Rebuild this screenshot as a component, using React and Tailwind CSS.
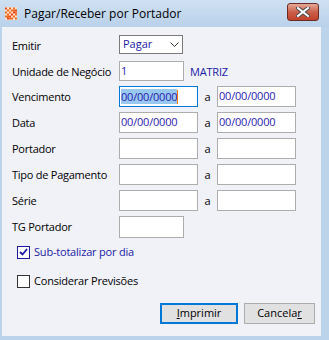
import React from 'react';

const font = { fontFamily: '"Open Sans", "Noto Sans", sans-serif' };

const Box = ({ w = 'w-[79px]', h = 'h-[21px]', focused, children }) => (
  <div
    className={`${w} ${h} flex items-center bg-white border ${focused ? 'border-[#0078d7]' : 'border-[#adadad]'} pl-[1px] text-[11px] tracking-[-0.2px] text-[#2a1ab0]`}
  >
    {children}
  </div>
);

const Row = ({ label, h = 'h-[26px]', children }) => (
  <div className={`flex items-start ${h}`}>
    <div className="w-[107px] pt-[3px] text-[11px] tracking-[-0.25px] text-black">{label}</div>
    {children}
  </div>
);

const Range = ({ from, to, focused }) => (
  <div className="flex items-start">
    <Box focused={focused}>{from}</Box>
    <span className="w-[19px] pt-[3px] text-center text-[11px] text-black">a</span>
    <Box>{to}</Box>
  </div>
);

const AppIcon = () => (
  <svg width="12" height="13" viewBox="0 0 12 13">
    <rect width="12" height="13" fill="#fde3cf" />
    {[0, 1, 2, 3, 4, 5].map((r) =>
      [0, 1, 2, 3, 4, 5].map((c) =>
        (r + c) % 2 === 0 || (r * c) % 3 === 1 ? (
          <rect key={`${r}-${c}`} x={c * 2} y={r * 2 + 0.5} width="2" height="2" fill={(r + c) % 3 ? '#f26b21' : '#e8461a'} />
        ) : null
      )
    )}
  </svg>
);

export default function App() {
  return (
    <div className="w-[329px] h-[340px] bg-[#bcd3ec] flex flex-col overflow-hidden" style={font}>
      {/* title bar */}
      <div className="h-[27px] flex items-center bg-gradient-to-b from-[#cfe0f2] to-[#b9d1ea] pl-[5px] pr-[10px] shrink-0">
        <AppIcon />
        <span className="ml-[7px] text-[12px] text-black">Pagar/Receber por Portador</span>
        <div className="ml-auto mb-[3px] w-[32px] h-[18px] rounded-[3px] border border-[#6b2a22] bg-gradient-to-b from-[#e5a898] via-[#c9604a] to-[#c2402a] flex items-center justify-center">
          <svg width="14" height="10" viewBox="0 0 14 10">
            <path d="M2 1 L12 9 M12 1 L2 9" stroke="#4a4a4a" strokeWidth="4" strokeLinecap="square" />
            <path d="M2 1 L12 9 M12 1 L2 9" stroke="#ffffff" strokeWidth="2" strokeLinecap="square" />
          </svg>
        </div>
      </div>

      {/* body */}
      <div className="ml-[2px] mr-[8px] h-[309px] bg-[#f0f2f8] pl-[10px] pt-[8px] flex flex-col">
        <Row label="Emitir">
          <div className="w-[64px] h-[19px] bg-white border border-[#7a7a7a] flex items-center justify-between pl-[3px] pr-[3px] text-[11px] text-[#1a1aa6]">
            <span>Pagar</span>
            <svg width="9" height="6" viewBox="0 0 9 6">
              <path d="M0.5 0.5 L4.5 4.5 L8.5 0.5" fill="none" stroke="#333" strokeWidth="1" />
            </svg>
          </div>
        </Row>
        <Row label="Unidade de Negócio" h="h-[25px]">
          <Box w="w-[65px]" h="h-[20px]">1</Box>
          <span className="ml-[6px] pt-[3px] text-[11px] tracking-[-0.2px] text-[#1a1aa6]">MATRIZ</span>
        </Row>
        <Row label="Vencimento">
          <Range
            focused
            from={
              <span className="flex items-center">
                <span className="bg-[#99c9ef] text-[#2a1ab0] leading-[15px]">00/00/0000</span>
                <span className="w-[1px] h-[14px] bg-[#ff7a00]" />
              </span>
            }
            to="00/00/0000"
          />
        </Row>
        <Row label="Data">
          <Range from="00/00/0000" to="00/00/0000" />
        </Row>
        <Row label="Portador">
          <Range />
        </Row>
        <Row label="Tipo de Pagamento">
          <Range />
        </Row>
        <Row label="Série">
          <Range />
        </Row>
        <Row label="TG Portador" h="h-[24px]">
          <Box w="w-[65px]" h="h-[22px]" />
        </Row>

        <div className="flex items-center h-[24px] pl-[5px]">
          <div className="w-[13px] h-[13px] border border-[#1a1aa6] bg-white flex items-center justify-center">
            <svg width="9" height="8" viewBox="0 0 9 8">
              <path d="M1 4 L3.5 6.5 L8 1" fill="none" stroke="#1a1aa6" strokeWidth="1.8" />
            </svg>
          </div>
          <span className="ml-[4px] text-[11px] tracking-[-0.2px] text-[#1a1aa6]">Sub-totalizar por dia</span>
        </div>
        <div className="flex items-center h-[34px] pl-[5px]">
          <div className="w-[13px] h-[13px] border border-[#333333] bg-white" />
          <span className="ml-[4px] text-[11px] tracking-[-0.2px] text-black">Considerar Previsões</span>
        </div>

        <div className="flex justify-end gap-[6px] pr-[6px] mt-[5px]">
          <button className="w-[78px] h-[21px] border-2 border-[#0078d7] bg-[#e1e1e1] text-[11px] text-black">
            <span className="underline">I</span>mprimir
          </button>
          <button className="w-[71px] h-[21px] border border-[#adadad] bg-[#e1e1e1] text-[11px] text-black">
            Cancela<span className="underline">r</span>
          </button>
        </div>
      </div>
    </div>
  );
}
